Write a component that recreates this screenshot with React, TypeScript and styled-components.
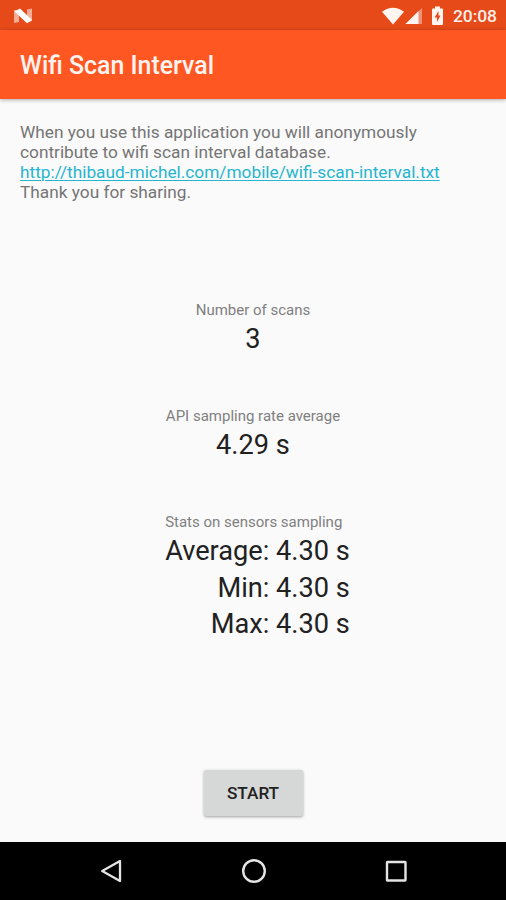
import React from "react";
import styled, { createGlobalStyle } from "styled-components";

const GlobalStyle = createGlobalStyle`
  body { margin: 0; background: #fafafa; }
  * { box-sizing: border-box; }
`;

const Screen = styled.div`
  display: flex;
  flex-direction: column;
  width: 506px;
  height: 900px;
  overflow: hidden;
  background: #fafafa;
  font-family: Roboto, "Liberation Sans", sans-serif;
`;

const StatusBar = styled.div`
  display: flex;
  align-items: center;
  justify-content: space-between;
  flex: none;
  height: 30px;
  padding: 2px 9px 0 13px;
  background: #e64a19;
  color: #fff1ec;
`;

const StatusIcons = styled.div`
  display: flex;
  align-items: center;
`;

const Clock = styled.span`
  margin-left: 8px;
  font-size: 17.4px;
  line-height: 20px;
  font-weight: 500;
`;

const AppBar = styled.header`
  display: flex;
  align-items: center;
  flex: none;
  height: 69px;
  padding: 2px 20px 0;
  background: #ff5722;
  box-shadow: 0 1px 4px rgba(0, 0, 0, 0.32);
`;

const Title = styled.h1`
  margin: 0;
  color: #fff4f0;
  font-size: 24.9px;
  line-height: 30px;
  font-weight: 500;
`;

const Content = styled.main`
  display: flex;
  flex-direction: column;
  align-items: center;
  flex: 1;
  padding: 23px 20px 0;
`;

const Notice = styled.p`
  align-self: stretch;
  margin: 0 0 98px;
  color: #757575;
  font-size: 17.27px;
  line-height: 20px;
  white-space: nowrap;
`;

const Link = styled.a`
  color: #26b5ce;
  text-decoration: underline;
  text-decoration-thickness: 1px;
  text-underline-offset: 2px;
`;

const Stat = styled.section<{ $height: number; $indent?: number }>`
  display: flex;
  flex-direction: column;
  align-items: flex-start;
  height: ${(p) => p.$height}px;
  padding-left: ${(p) => p.$indent ?? 0}px;
`;

const Label = styled.div`
  margin-bottom: 1px;
  color: #808080;
  font-size: 15px;
  line-height: 20px;
`;

const Value = styled.div<{ $align?: "center" | "right" }>`
  align-self: stretch;
  color: #212121;
  font-size: 27.2px;
  line-height: 36.6px;
  text-align: ${(p) => p.$align ?? "center"};
`;

const StartButton = styled.button`
  width: 99px;
  height: 46px;
  padding: 0;
  border: 0;
  border-radius: 2px;
  background: #d6d7d7;
  box-shadow: 0 1px 3px rgba(0, 0, 0, 0.36);
  color: #212121;
  font: 500 17.2px/46px Roboto, sans-serif;
`;

const NavBar = styled.nav`
  display: flex;
  justify-content: space-between;
  flex: none;
  height: 58px;
  padding: 16px 97px 0 98px;
  background: #000;
`;

const Glyph = styled.svg`
  display: block;
  flex: none;
`;

export default function App() {
  return (
    <>
      <GlobalStyle />
      <Screen>
        <StatusBar>
          <Glyph width="20" height="16" viewBox="0 0 20 16">
            <path d="M1 2H6V14L1 15Z" fill="#fff" opacity=".55" />
            <path d="M14 1.5L19 .5V13L14 14.5Z" fill="#fff" opacity=".55" />
            <path d="M1.5 3.5L7 .5L19 12L14 15.2Z" fill="#fff" />
          </Glyph>
          <StatusIcons>
            <Glyph width="22" height="18" viewBox="0 0 22 18">
              <path d="M0 4.8Q11-3.2 22 4.8L11 17.4Z" fill="#fff4f0" />
            </Glyph>
            <Glyph width="19" height="18" viewBox="0 0 19 18">
              <path d="M1.5 17L18 1V17Z" fill="#fff" opacity=".4" />
              <path d="M1.5 17L14.5 4V17Z" fill="#fff4f0" />
            </Glyph>
            <Glyph width="22" height="20" viewBox="0 0 22 20">
              <path d="M10 2.5H12V.5H17V2.5H19Q20 2.5 20 3.5V18Q20 19 19 19H10Q9 19 9 18V3.5Q9 2.5 10 2.5Z" fill="#fff4f0" />
              <path d="M15.5 5L11.5 11.5H14V16L17.5 9.5H15.5Z" fill="#e64a19" />
            </Glyph>
            <Clock>20:08</Clock>
          </StatusIcons>
        </StatusBar>
        <AppBar>
          <Title>Wifi Scan Interval</Title>
        </AppBar>
        <Content>
          <Notice>
            When you use this application you will anonymously
            <br />
            contribute to wifi scan interval database.
            <br />
            <Link>http://thibaud-michel.com/mobile/wifi-scan-interval.txt</Link>
            <br />
            Thank you for sharing.
          </Notice>
          <Stat $height={106}>
            <Label>Number of scans</Label>
            <Value>3</Value>
          </Stat>
          <Stat $height={106}>
            <Label>API sampling rate average</Label>
            <Value>4.29 s</Value>
          </Stat>
          <Stat $height={258} $indent={9}>
            <Label>Stats on sensors sampling</Label>
            <Value $align="right">Average: 4.30 s</Value>
            <Value $align="right">Min: 4.30 s</Value>
            <Value $align="right">Max: 4.30 s</Value>
          </Stat>
          <StartButton>START</StartButton>
        </Content>
        <NavBar>
          <Glyph width="26" height="26" viewBox="0 0 26 26">
            <path d="M4.2 13L22 3V23Z" fill="none" stroke="#e4e4e4" strokeWidth="2.3" strokeLinejoin="round" />
          </Glyph>
          <Glyph width="26" height="26" viewBox="0 0 26 26">
            <circle cx="13" cy="13" r="10.8" fill="none" stroke="#e4e4e4" strokeWidth="2.4" />
          </Glyph>
          <Glyph width="26" height="26" viewBox="0 0 26 26">
            <rect x="4" y="4" width="18.5" height="18.5" rx=".5" fill="none" stroke="#e4e4e4" strokeWidth="2.4" />
          </Glyph>
        </NavBar>
      </Screen>
    </>
  );
}
